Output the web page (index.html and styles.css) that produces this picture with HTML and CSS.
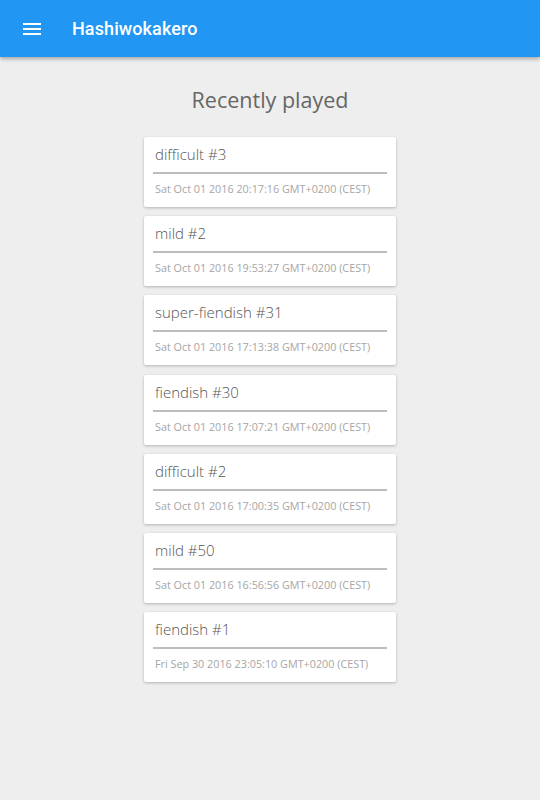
FILE: index.html
```html
<!DOCTYPE html>
<html>
<head>
<meta charset="utf-8">
<link rel="stylesheet" href="styles.css">
</head>
<body>
<header class="appbar">
  <svg class="menu" width="18" height="12" viewBox="0 0 18 12"><rect x="0" y="0" width="18" height="2" fill="#fff"/><rect x="0" y="5" width="18" height="2" fill="#fff"/><rect x="0" y="10" width="18" height="2" fill="#fff"/></svg>
  <span class="title">Hashiwokakero</span>
</header>
<main class="content">
  <h1 class="heading">Recently played</h1>
  <ul class="list">
    <li class="card"><div class="name">difficult #3</div><div class="date">Sat Oct 01 2016 20:17:16 GMT+0200 (CEST)</div></li>
    <li class="card"><div class="name">mild #2</div><div class="date">Sat Oct 01 2016 19:53:27 GMT+0200 (CEST)</div></li>
    <li class="card"><div class="name">super-fiendish #31</div><div class="date">Sat Oct 01 2016 17:13:38 GMT+0200 (CEST)</div></li>
    <li class="card"><div class="name">fiendish #30</div><div class="date">Sat Oct 01 2016 17:07:21 GMT+0200 (CEST)</div></li>
    <li class="card"><div class="name">difficult #2</div><div class="date">Sat Oct 01 2016 17:00:35 GMT+0200 (CEST)</div></li>
    <li class="card"><div class="name">mild #50</div><div class="date">Sat Oct 01 2016 16:56:56 GMT+0200 (CEST)</div></li>
    <li class="card"><div class="name">fiendish #1</div><div class="date">Fri Sep 30 2016 23:05:10 GMT+0200 (CEST)</div></li>
  </ul>
</main>
</body>
</html>
```
FILE: styles.css
```css
html, body {
  margin: 0;
  padding: 0;
  background: #eeeeee;
  height: 100%;
}
body {
  font-family: "Open Sans", sans-serif;
}
.appbar {
  height: 57px;
  background: #2196f3;
  display: flex;
  align-items: center;
  padding-left: 23px;
  box-shadow: 0 2px 4px rgba(0,0,0,0.3);
  position: relative;
}
.menu {
  display: block;
}
.title {
  margin-left: 31px;
  color: #fff;
  font-family: Roboto, sans-serif;
  font-weight: 500;
  font-size: 18px;
  letter-spacing: 0.1px;
}
.content {
  display: flex;
  flex-direction: column;
  align-items: center;
}
.heading {
  margin: 29px 0 0;
  font-weight: 400;
  font-size: 21.5px;
  color: #666;
  line-height: 28px;
}
.list {
  list-style: none;
  margin: 23px 0 0;
  padding: 0;
  display: flex;
  flex-direction: column;
  gap: 9.2px;
}
.card {
  width: 252px;
  height: 70px;
  box-sizing: border-box;
  background: #fff;
  border-radius: 2px;
  box-shadow: 0 1px 3px rgba(0,0,0,0.25);
  padding: 6px 9px 0;
}
.name {
  font-size: 15px;
  font-weight: 300;
  color: #555;
  line-height: 22px;
  padding: 0 2px 7px;
  border-bottom: 2px solid #bdbdbd;
}
.date {
  font-size: 10.8px;
  color: #a6a6a6;
  padding: 7px 2px 0;
  line-height: 15px;
}
```
